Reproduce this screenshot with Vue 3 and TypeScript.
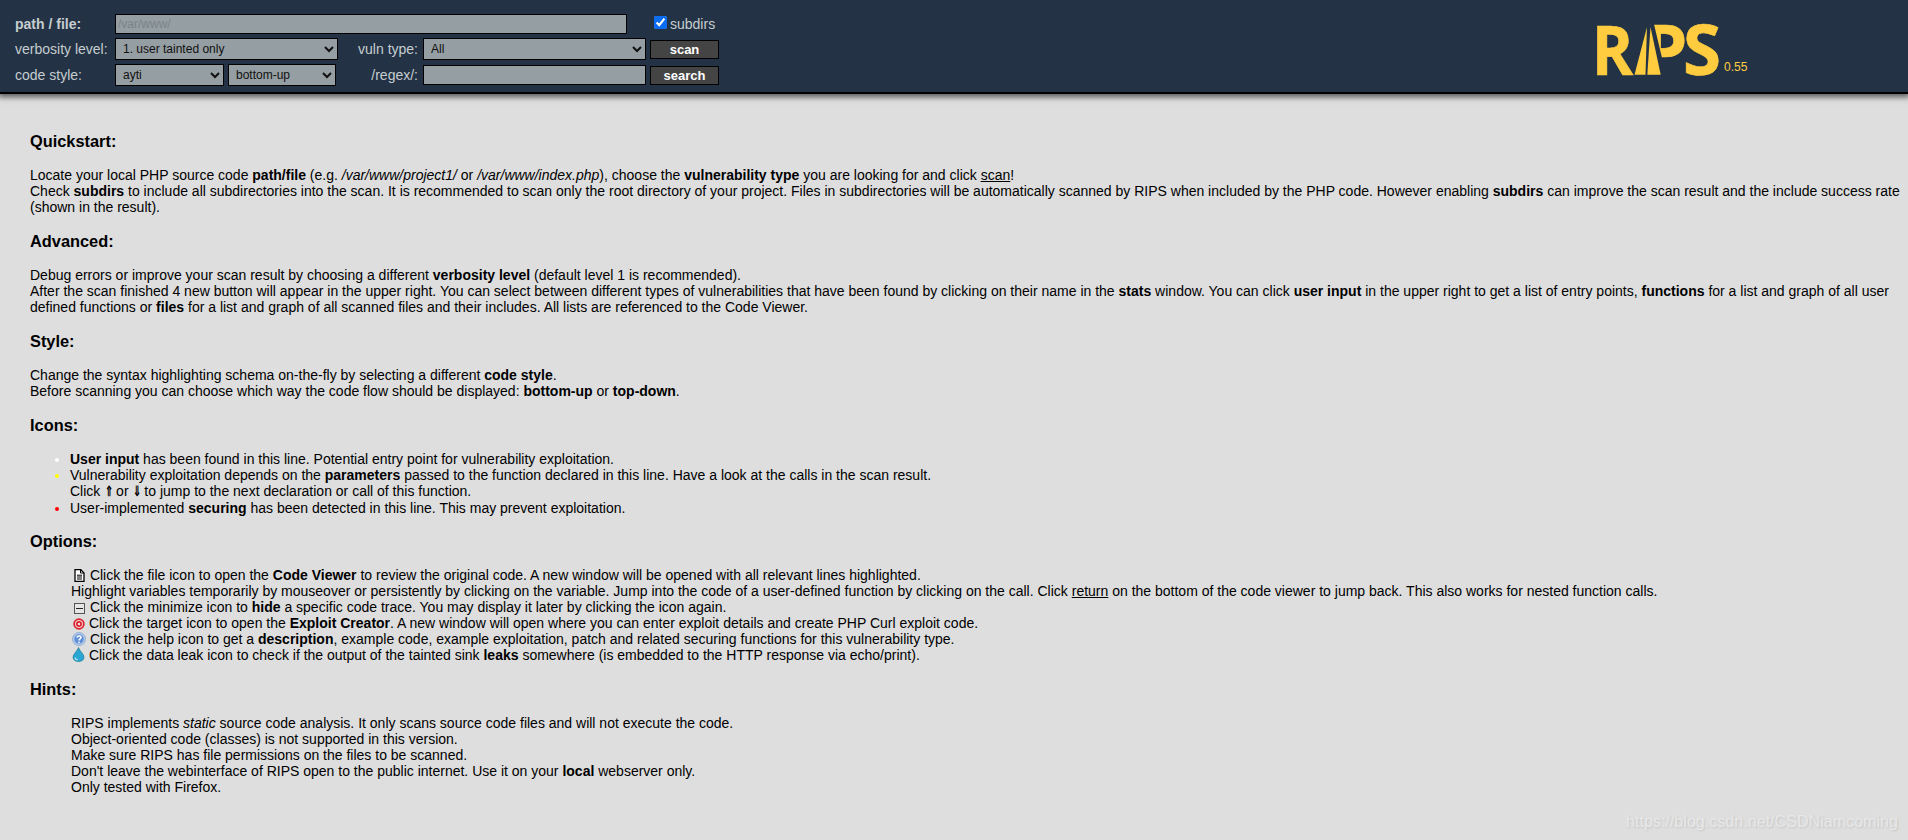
<script setup lang="ts">
const styles: string[] = ['ayti', 'phps', 'code-dark', 'print']
const flows: string[] = ['bottom-up', 'top-down']
</script>

<template>
  <div class="page">
    <header class="menu">
      <form class="form" @submit.prevent>
        <div class="row row-path">
          <label class="lab strong">path / file:</label>
          <input class="field path" type="text" placeholder="/var/www/" />
          <label class="subdirs"><input type="checkbox" checked class="check" />subdirs</label>
        </div>
        <div class="row">
          <label class="lab">verbosity level:</label>
          <select class="field sel-verb"><option>1. user tainted only</option></select>
          <label class="lab2">vuln type:</label>
          <select class="field sel-vuln"><option>All</option></select>
          <button class="btn" type="button">scan</button>
        </div>
        <div class="row">
          <label class="lab">code style:</label>
          <select class="field sel-style"><option v-for="s in styles" :key="s">{{ s }}</option></select>
          <select class="field sel-flow"><option v-for="f in flows" :key="f">{{ f }}</option></select>
          <label class="lab2 lab3">/regex/:</label>
          <input class="field regex" type="text" />
          <button class="btn" type="button">search</button>
        </div>
      </form>
      <div class="logo">
        <svg class="logo-svg" width="130" height="64" viewBox="0 0 130 64">
          <text class="logo-text" transform="translate(1.700 56.700) scale(.91 1)">R</text>
          <text class="logo-text" transform="translate(54 56.700)">P</text>
          <polygon points="63,2 72,40 72,62 46,62 46,2" fill="#233345" />
          <polygon points="57,9 55.500,56.700 44.500,56.700" fill="#ffcc40" />
          <polygon points="60.500,9 70.700,56.700 57.300,56.700" fill="#ffcc40" />
          <text class="logo-text" transform="translate(93 56.700)">S</text>
        </svg>
        <span class="ver">0.55</span>
      </div>
    </header>

    <main class="content">
      <h3>Quickstart:</h3>
      <p>Locate your local PHP source code <b>path/file</b> (e.g. <i>/var/www/project1/</i> or <i>/var/www/index.php</i>), choose the <b>vulnerability type</b> you are looking for and click <u>scan</u>!<br />
      Check <b>subdirs</b> to include all subdirectories into the scan. It is recommended to scan only the root directory of your project. Files in subdirectories will be automatically scanned by RIPS when included by the PHP code. However enabling <b>subdirs</b> can improve the scan result and the include success rate (shown in the result).</p>

      <h3>Advanced:</h3>
      <p>Debug errors or improve your scan result by choosing a different <b>verbosity level</b> (default level 1 is recommended).<br />
      After the scan finished 4 new button will appear in the upper right. You can select between different types of vulnerabilities that have been found by clicking on their name in the <b>stats</b> window. You can click <b>user input</b> in the upper right to get a list of entry points, <b>functions</b> for a list and graph of all user defined functions or <b>files</b> for a list and graph of all scanned files and their includes. All lists are referenced to the Code Viewer.</p>

      <h3>Style:</h3>
      <p>Change the syntax highlighting schema on-the-fly by selecting a different <b>code style</b>.<br />
      Before scanning you can choose which way the code flow should be displayed: <b>bottom-up</b> or <b>top-down</b>.</p>

      <h3>Icons:</h3>
      <ul class="bullets">
        <li class="white"><b>User input</b> has been found in this line. Potential entry point for vulnerability exploitation.</li>
        <li class="yellow">Vulnerability exploitation depends on the <b>parameters</b> passed to the function declared in this line. Have a look at the calls in the scan result.<br />
        Click <b class="arrow">⇑</b> or <b class="arrow">⇓</b> to jump to the next declaration or call of this function.</li>
        <li class="red">User-implemented <b>securing</b> has been detected in this line. This may prevent exploitation.</li>
      </ul>

      <h3>Options:</h3>
      <div class="plain">
        <div class="opt">
          <svg class="ico file" width="11" height="13" viewBox="0 0 11 13"><path d="M1 .7h5.800l3.200 3.200v8.400h-9z" fill="#fff" stroke="#000" stroke-width="1.300" /><path d="M6.500 .7v3.300h3.500M3 6.200h5M3 8h5M3 10h5" fill="none" stroke="#000" /></svg>
          Click the file icon to open the <b>Code Viewer</b> to review the original code. A new window will be opened with all relevant lines highlighted.
        </div>
        <div class="opt">Highlight variables temporarily by mouseover or persistently by clicking on the variable. Jump into the code of a user-defined function by clicking on the call. Click <u>return</u> on the bottom of the code viewer to jump back. This also works for nested function calls.</div>
        <div class="opt">
          <svg class="ico file" width="11" height="11" viewBox="0 0 11 11"><rect x=".5" y=".5" width="10" height="10" fill="#e6e6e6" stroke="#555" /><path d="M2 5.500h7" stroke="#222" /></svg>
          Click the minimize icon to <b>hide</b> a specific code trace. You may display it later by clicking the icon again.
        </div>
        <div class="opt">
          <svg class="ico target" width="12" height="12" viewBox="0 0 13 13"><circle cx="6.500" cy="6.500" r="6.200" fill="#d8232f" /><circle cx="6.500" cy="6.500" r="4.300" fill="#f9d5d5" /><circle cx="6.500" cy="6.500" r="3.200" fill="#d8232f" /><circle cx="6.500" cy="6.500" r="1.300" fill="#fbe3e3" /></svg>
          Click the target icon to open the <b>Exploit Creator</b>. A new window will open where you can enter exploit details and create PHP Curl exploit code.
        </div>
        <div class="opt">
          <svg class="ico help" width="14" height="14" viewBox="0 0 14 14"><circle cx="7" cy="7" r="6.600" fill="#b3c9e8" stroke="#7d9fd0" stroke-width=".6" /><circle cx="7" cy="7" r="4.700" fill="#5f8ed8" /><path d="M5 5.600c.2-2.300 4-2.300 4 0 0 1.400-2 1.300-2 2.800" fill="none" stroke="#fff" stroke-width="1.500" /><circle cx="7" cy="10.300" r=".9" fill="#fff" /></svg>
          Click the help icon to get a <b>description</b>, example code, example exploitation, patch and related securing functions for this vulnerability type.
        </div>
        <div class="opt">
          <svg class="ico leak" width="13" height="15" viewBox="0 0 13 15"><path d="M6.500.5C7.500 4 12 7 12 10.200c0 2.700-2.500 4.300-5.500 4.300S1 12.900 1 10.200C1 7 5.500 4 6.500.5z" fill="#2aa6d2" stroke="#15708f" stroke-width=".6" /><path d="M3 10.500c.2 1.300 1.200 2.200 2.700 2.500" stroke="#d0f3fb" stroke-width="1.200" fill="none" /></svg>
          Click the data leak icon to check if the output of the tainted sink <b>leaks</b> somewhere (is embedded to the HTTP response via echo/print).
        </div>
      </div>

      <h3>Hints:</h3>
      <div class="plain">
        <div>RIPS implements <i>static</i> source code analysis. It only scans source code files and will not execute the code.</div>
        <div>Object-oriented code (classes) is not supported in this version.</div>
        <div>Make sure RIPS has file permissions on the files to be scanned.</div>
        <div>Don't leave the webinterface of RIPS open to the public internet. Use it on your <b>local</b> webserver only.</div>
        <div>Only tested with Firefox.</div>
      </div>
    </main>
    <div class="mark">https://blog.csdn.net/CSDNiamcoming</div>
  </div>
</template>

<style>
html, body { margin: 0; background: #dedede; }
</style>

<style scoped>
.page {
  position: relative;
  width: 1908px;
  height: 840px;
  overflow: hidden;
  background: #dedede;
  font-family: "Liberation Sans", Arial, sans-serif;
  font-size: 14px;
  color: #000;
}
.menu {
  display: flex;
  box-sizing: border-box;
  height: 94px;
  padding: 13px 0 0 15px;
  background: #233345;
  border-bottom: 2px solid #000;
  box-shadow: 0 1px 6px 2px #555;
}
.form { display: flex; flex-direction: column; gap: 4px; width: 704px; flex: none; color: #c6cdd0; }
.row { display: flex; align-items: center; height: 22px; }
.row-path { height: 21px; }
.lab { width: 100px; flex: none; }
.strong { font-weight: bold; }
.lab2 { width: 80px; text-align: right; margin-right: 5px; flex: none; }
.field {
  box-sizing: border-box;
  height: 21px;
  padding: 0 0 0 2px;
  background: #959ea2;
  border: 1px solid #000;
  border-radius: 0;
  outline: none;
  font: 12px "Liberation Sans", Arial, sans-serif;
  color: #111;
  flex: none;
}
select.field { height: 22px; padding-left: 3px; }
.path { width: 512px; height: 20px; }
.path::placeholder { color: #7b8488; opacity: 1; }
.subdirs { display: flex; align-items: center; margin-left: 27px; font-size: 14px; }
.check { width: 13px; height: 13px; margin: 0 3px 0 0; accent-color: #0a6cf0; position: relative; top: -1px; }
.sel-verb { width: 223px; }
.sel-vuln { width: 223px; }
.sel-style { width: 109px; }
.sel-flow { width: 108px; margin-left: 4px; }
.lab3 { width: 82px; }
.regex { width: 223px; height: 20px; }
.btn {
  box-sizing: border-box;
  width: 69px;
  height: 19px;
  margin-left: 4px;
  padding: 0;
  background: #444;
  border: 1px solid #000;
  color: #fff;
  font: bold 13px "Liberation Sans", Arial, sans-serif;
}
.logo { display: flex; margin-left: 871px; margin-top: 5px; align-items: flex-start; }
.logo-svg { display: block; margin-right: 4px; }
.logo-text { font-family: "Open Sans", sans-serif; font-weight: 700; font-size: 69px; fill: #ffcc40; stroke: #ffcc40; stroke-width: .6px; }
.ver { margin-top: 42px; font-size: 12px; color: #ffcc40; }
.content { padding: 38px 8px 0 30px; line-height: 16px; }
h3 { margin: 0 0 17px; font-size: 16.380px; line-height: 18px; font-weight: bold; }
p { margin: 0 0 17px; }
.bullets { margin: 0 0 16px; padding: 0 0 0 40px; list-style: disc; }
.white::marker { color: #fff; }
.yellow::marker { color: #ff0; }
.red { margin-top: 1px; }
.red::marker { color: #f00; }
.arrow { display: inline-block; width: 8px; text-align: center; transform: scaleX(.7); }
.plain { margin: 0 0 17px 41px; }
.opt { height: 16px; white-space: nowrap; }
.ico { display: inline-block; vertical-align: -2px; }
.file { margin: 0 1px 0 3px; }
.target { margin: 0 0 0 2px; }
.help { margin: 0 0 0 1px; }
.leak { margin: 0 0 0 1px; }
.mark {
  position: absolute;
  right: 10px;
  bottom: 9px;
  font-size: 16.100px;
  color: #e8e8e8;
  text-shadow: 1px 1px 2px #c4c4c4;
}
</style>
